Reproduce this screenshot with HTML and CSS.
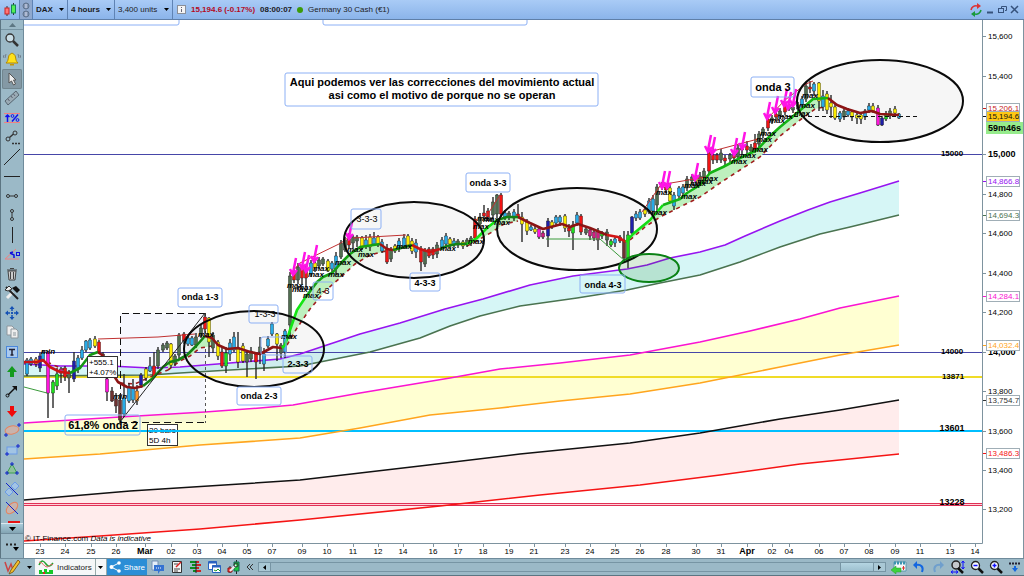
FILE: index.html
```html
<!DOCTYPE html>
<html lang="en">
<head>
    <meta charset="UTF-8">
    <meta name="viewport" content="width=device-width, initial-scale=1.0">
    <title>DAX - 4 hours</title>
    <link rel="stylesheet" href="styles.css">
</head>
<body>

<header class="topbar">
    <button class="top-btn top-logo" aria-label="Chart style">
        <svg width="14" height="14" viewBox="0 0 14 14"><path d="M4 3v10M10.500 0v12" stroke="#333"/><rect x="2" y="5" width="4" height="6" fill="#f77" stroke="#c22"/><rect x="8.500" y="2" width="4" height="8" fill="#5e5" stroke="#185"/></svg>
    </button>
    <button class="top-btn top-link" aria-label="Link windows">
        <svg width="10" height="16" viewBox="0 0 10 16"><g fill="#8397b5" stroke="#60728c"><circle cx="5" cy="4" r="3"/><circle cx="5" cy="12" r="3"/></g><path d="M5 2v4M5 10v4" stroke="#dde"/></svg>
    </button>
    <span class="picker">
        <select class="bold" aria-label="Instrument"><option>DAX</option></select>
        <svg class="caret" viewBox="0 0 5 3"><path d="M0 0h5L2.500 3z"/></svg>
    </span>
    <span class="picker">
        <select class="bold" aria-label="Timeframe"><option>4 hours</option></select>
        <svg class="caret" viewBox="0 0 5 3"><path d="M0 0h5L2.500 3z"/></svg>
    </span>
    <span class="picker">
        <select aria-label="Units"><option>3,400 units</option></select>
        <svg class="caret" viewBox="0 0 5 3"><path d="M0 0h5L2.500 3z"/></svg>
    </span>
    <div class="quote">
        <svg width="9" height="9" viewBox="0 0 9 9"><rect x=".5" y=".5" width="8" height="8" fill="#f4f4f4" stroke="#8a8f99"/><path d="M4.500 2v1M4.500 4v3" stroke="#667"/></svg>
        <b class="down">15,194.6 (-0.17%)</b>
        <b>08:00:07</b>
        <span class="dot"></span>
        <span>Germany 30 Cash (€1)</span>
    </div>
    <div class="window-buttons">
        <button aria-label="Refresh"><svg width="14" height="14" viewBox="0 0 14 14" fill="none" stroke-width="1.500"><path d="M2 7a5 5 0 0 1 6-4" stroke="#d33"/><path d="M12 7a5 5 0 0 1-6 4" stroke="#1a9a3a"/><path d="M8 0l4 3-4 3z" fill="#d33"/><path d="M6 8l-4 3 4 3z" fill="#1a9a3a"/></svg></button>
        <button aria-label="Minimise"><svg width="9" height="9" viewBox="0 0 9 9"><path d="M1 7.500h6" stroke="#36527c" stroke-width="2"/></svg></button>
        <button aria-label="Restore"><svg width="9" height="9" viewBox="0 0 9 9" fill="none" stroke="#36527c"><path d="M3.500 3V1.500h5v4H7"/><rect x=".5" y="3.500" width="5" height="4"/></svg></button>
        <button aria-label="Close"><svg width="9" height="9" viewBox="0 0 9 9"><path d="M1 1l7 7M8 1L1 8" stroke="#36527c" stroke-width="1.500"/></svg></button>
    </div>
</header>

<main class="workspace">
    <nav class="tools" aria-label="Drawing tools">
        <button class="tools-up" aria-label="Scroll up"><svg width="7" height="4" viewBox="0 0 7 4"><path d="M0 4h7L3.500 0z" fill="#5d7783"/></svg></button>
        <div class="tool-list">
            <button aria-label="Zoom"><svg class="tool" viewBox="0 0 18 18"><circle cx="7" cy="7" r="4" fill="#c9dde6" stroke="#333" stroke-width="1.300"/><path d="M10 10l5 5" stroke="#333" stroke-width="2.500"/></svg></button>
            <button aria-label="Alert"><svg class="tool" viewBox="0 0 18 18"><path d="M3 13c2-2 2-3 2.500-6C6 4 8 4 9 3c1 1 3 1 3.500 4 .5 3 .5 4 2.500 6z" fill="#ffe11a" stroke="#b48a00"/><path d="M7 14h4v1.500H7z" fill="#c89600"/><path d="M3 4L2 8M15 4l1 4M1 5L0 8M17 5l1 3" stroke="#556" stroke-width=".6"/></svg></button>
            <button class="selected" aria-label="Pointer"><svg class="tool" viewBox="0 0 18 18"><path d="M6 3v10l2.500-2 2 4 2-1-2-4H13z" fill="#eee" stroke="#555"/></svg></button>
            <button aria-label="Ruler"><svg class="tool" viewBox="0 0 18 18"><path d="M2 12L13 2l3 4L5 16z" fill="#9aabb5" stroke="#566570"/><path d="M5 10l1.500 2M8 7l1.500 2M10.500 5l1.500 2" stroke="#445" stroke-width=".7"/></svg></button>
            <button aria-label="Percent"><svg class="tool" viewBox="0 0 18 18"><path d="M1 4.500h16M1 13.500h16" stroke="#f28080"/><path d="M4.500 13V6M2.500 8l2-2 2 2M15 5.500L9 12.500" stroke="#11e" stroke-width="1.500" fill="none"/><circle cx="9.500" cy="7" r="1.400" fill="none" stroke="#11e"/><circle cx="14.500" cy="11" r="1.400" fill="none" stroke="#11e"/></svg></button>
            <button aria-label="Segment"><svg class="tool" viewBox="0 0 18 18" fill="none" stroke="#333"><circle cx="5" cy="11" r="2"/><circle cx="12" cy="5" r="2"/><path d="M6.500 9.500l4-3.500" stroke-width="1.500"/><path d="M9 15.500h8" stroke-dasharray="2 1" stroke-width="1.500"/></svg></button>
            <button aria-label="Line"><svg class="tool" viewBox="0 0 18 18"><path d="M1 17L17 1" stroke="#222"/></svg></button>
            <button aria-label="Horizontal line"><svg class="tool" viewBox="0 0 18 18"><path d="M1 9.500h16" stroke="#222"/></svg></button>
            <button aria-label="Horizontal segment"><svg class="tool" viewBox="0 0 18 18" fill="none" stroke="#333"><circle cx="5" cy="9" r="1.500"/><circle cx="13" cy="9" r="1.500"/><path d="M6.500 9h5"/></svg></button>
            <button aria-label="Vertical segment"><svg class="tool" viewBox="0 0 18 18" fill="none" stroke="#333"><circle cx="9" cy="5" r="1.500"/><circle cx="9" cy="13" r="1.500"/><path d="M9 6.500v5"/></svg></button>
            <button aria-label="Vertical line"><svg class="tool" viewBox="0 0 18 18"><path d="M9.500 1v16" stroke="#222"/></svg></button>
            <button aria-label="Angle"><svg class="tool" viewBox="0 0 18 18" fill="none"><path d="M13 4L2 14h14" stroke="#f08080"/><path d="M7 8l4 2v3M7 8l3-1" stroke="#11d" stroke-width="1.500"/><rect x="13.500" y="7.500" width="3" height="3" stroke="#11d"/></svg></button>
            <button aria-label="Delete"><svg class="tool" viewBox="0 0 18 18" fill="none" stroke="#444"><path d="M5 6l1 9h6l1-9z" fill="#ccc"/><path d="M4 5h10M7 3.500h4M7.500 7v7M10.500 7v7"/></svg></button>
            <button aria-label="Settings"><svg class="tool" viewBox="0 0 18 18"><path d="M4 14l6-6" stroke="#eee" stroke-width="3"/><path d="M3 3l12 12" stroke="#222" stroke-width="2"/><path d="M2 6l4-4 3 3-4 2z" fill="#eee" stroke="#333"/><path d="M9 4l4-2 4 4-3 3z" fill="#111"/></svg></button>
            <button aria-label="Move"><svg class="tool" viewBox="0 0 18 18" fill="#1450b4"><path d="M9 2l2.500 3h-5zM9 16l2.500-3h-5zM2 9l3-2.500v5zM16 9l-3-2.500v5z"/><path d="M9 5v8M5 9h8" stroke="#1450b4" stroke-dasharray="2 1" stroke-width="1.500"/></svg></button>
            <button aria-label="Copy"><svg class="tool" viewBox="0 0 18 18" fill="#eee" stroke="#8d979d"><path d="M4 3h5l2 2v7H4z"/><path d="M8 6h5l2 2v7H8z"/><path d="M10 10h3M10 12h3"/></svg></button>
            <button aria-label="Text"><svg class="tool" viewBox="0 0 18 18" fill="none"><rect x="3.500" y="3.500" width="11" height="11" fill="#a9caef" stroke="#4b88dc"/><path d="M6 6.500h6M9 6v6M7.500 12h3" stroke="#223" stroke-width="1.500"/></svg></button>
            <button aria-label="Up arrow"><svg class="tool" viewBox="0 0 18 18"><path d="M9 3l5 6h-3v5H7V9H4z" fill="#149a1e"/></svg></button>
            <button aria-label="Arrow"><svg class="tool" viewBox="0 0 18 18"><path d="M5 13l7-7" stroke="#111" stroke-width="1.500"/><path d="M9 4h5v5z" fill="#111"/><circle cx="4.500" cy="13.500" r="1.500" fill="none" stroke="#111"/></svg></button>
            <button aria-label="Down arrow"><svg class="tool" viewBox="0 0 18 18"><path d="M9 15l5-6h-3V4H7v5H4z" fill="#f00a0a"/></svg></button>
            <button aria-label="Ellipse"><svg class="tool" viewBox="0 0 18 18"><ellipse cx="9" cy="9" rx="7" ry="4" fill="#c9b3ac" stroke="#e58460" transform="rotate(-10 9 9)"/><path d="M1 14h4M3 12v4M14 4h4M16 2v4" stroke="#12c"/></svg></button>
            <button aria-label="Rectangle"><svg class="tool" viewBox="0 0 18 18"><rect x="4" y="6" width="10" height="7" fill="#a2c4e4" stroke="#6b9ae6"/><path d="M2 13h4M4 11v4M13 5h4M15 3v4" stroke="#12c"/></svg></button>
            <button aria-label="Triangle"><svg class="tool" viewBox="0 0 18 18"><path d="M9 4l5 9H4z" fill="#8fc09d" stroke="#3da14c"/><path d="M7 4h4M9 2v4M2 13h4M4 11v4M12 13h4M14 11v4" stroke="#12c"/></svg></button>
            <button aria-label="Channel"><svg class="tool" viewBox="0 0 18 18" fill="none"><path d="M2 12l4-4 4 4-4 4zM8 6l4-4 4 4-4 4z" fill="#a2c4e4" stroke="#6b9ae6"/><path d="M3 3l12 12" stroke="#12c"/></svg></button>
            <button aria-label="Fibonacci ellipse"><svg class="tool" viewBox="0 0 18 18"><ellipse cx="9" cy="9" rx="7" ry="4" fill="#c9b3ac" stroke="#e58460" transform="rotate(-45 9 9)"/><path d="M3 3l12 12" stroke="#12c"/></svg></button>
        </div>
        <div class="tools-cut"></div>
        <button class="tools-down" aria-label="Scroll down"><svg width="7" height="4" viewBox="0 0 7 4"><path d="M0 0h7L3.500 4z"/></svg></button>
        <button class="tools-more" aria-label="More tools"><svg width="14" height="10" viewBox="0 0 14 10"><path d="M1 3.500h11" stroke="#222" stroke-width="2" stroke-dasharray="2 2"/><path d="M8 6h6l-3 4z"/></svg></button>
    </nav>

    <svg class="chart" id="chart" viewBox="24 20 1000 538" role="img" aria-label="DAX price chart">
        <defs><clipPath id="plot"><rect x="24" y="20" width="958" height="523"/></clipPath></defs>

        <g clip-path="url(#plot)">
            <g id="clouds"></g>
            <rect x="120" y="313" width="85" height="109" fill="#5064dc" fill-opacity=".05"/>
            <!-- circled corrections -->
            <g fill="#000" fill-opacity=".035">
                <ellipse cx="254" cy="349" rx="70" ry="38"/>
                <ellipse cx="414" cy="240" rx="70" ry="38"/>
                <ellipse cx="577" cy="229" rx="80" ry="41"/>
                <ellipse cx="880" cy="101" rx="83" ry="41"/>
            </g>

            <!-- price levels -->
            <path d="M24 154.500h958M24 352.500h958" stroke="#4646a8"/>
            <path d="M24 377h958" stroke="#f0dc28" stroke-width="2"/>
            <path d="M24 431h958" stroke="#00bfff" stroke-width="2"/>
            <path d="M24 504.500h958" stroke="#ffd0d8"/>
            <path d="M24 503.500h958M24 505.500h958" stroke="#e03055"/>

            <g id="averages" class="curve"></g>

            <!-- measured swing -->
            <path d="M120.500 422V313.500H205M120 422.500h85" class="thin" stroke="#111" stroke-dasharray="7 4"/>
            <path d="M205.500 313v110" class="thin" stroke="#555" stroke-dasharray="3 3"/>

            <g id="bands"></g>
            <g id="candles"></g>
            <g id="trend" class="curve"></g>
            <path class="thin" stroke="#222" d="M120 422L205 313"/>
            <path class="thin" stroke="#c03030" d="M98 339l60-2 37-3M290 274l10-11 41-20 8-6M353 238l53-3M484 220l16-25M642 212l18-26M665 184l41-7M709 152l49-13M768 118l17-18 21-16 7-3"/>
            <path class="thin" stroke="#3a9a3a" d="M24 387l23 6M546 239h54l25 22"/>
            <path stroke="#111" stroke-dasharray="4 3" d="M780 116.500h137"/>
            <g id="marks" class="mark"></g>
            <g id="arrows"></g>

            <g class="ring">
                <ellipse cx="254" cy="349" rx="70" ry="38"/>
                <ellipse cx="414" cy="240" rx="70" ry="38"/>
                <ellipse cx="577" cy="229" rx="80" ry="41"/>
                <ellipse cx="880" cy="101" rx="83" ry="41"/>
            </g>
            <ellipse cx="649" cy="268" rx="30" ry="14" fill="#0a780a" fill-opacity=".15" stroke="#0a8214" stroke-width="2"/>

            <g class="note">
                <rect x="20" y="10" width="159" height="15"/>
                <rect x="323" y="10" width="204" height="15"/>
                <rect x="285" y="73" width="313" height="33" class="solid"/>
                <rect x="751" y="77" width="43" height="20"/>
                <rect x="466" y="173" width="44" height="19" class="solid"/>
                <rect x="178" y="288" width="44" height="19" class="solid"/>
                <rect x="580" y="275" width="45" height="18"/>
                <rect x="237" y="387" width="44" height="18" class="solid"/>
                <rect x="351" y="209" width="30" height="20"/>
                <rect x="410" y="273" width="30" height="18"/>
                <rect x="249" y="305" width="29" height="18"/>
                <rect x="283" y="356" width="29" height="17"/>
                <rect x="313" y="282" width="20" height="18"/>
                <rect x="261" y="337" width="25" height="18"/>
                <rect x="65" y="415" width="75" height="20"/>
            </g>
            <g class="note-text">
                <text x="442" y="86" class="large">Aqui podemos ver las correcciones del movimiento actual</text>
                <text x="442" y="99" class="large">asi como el motivo de porque no se operan</text>
                <text x="773" y="91" class="large">onda 3</text>
                <text x="103" y="429" class="large">61,8% onda 2</text>
                <text x="488" y="186">onda 3-3</text>
                <text x="200" y="300">onda 1-3</text>
                <text x="603" y="288">onda 4-3</text>
                <text x="259" y="399">onda 2-3</text>
                <text x="367" y="222" class="plain">3-3-3</text>
                <text x="425" y="286">4-3-3</text>
                <text x="265" y="317" class="plain">1-3-3</text>
                <text x="298" y="367">2-3-3</text>
                <text x="323" y="294" class="plain">4-3</text>
            </g>
            <g class="measure">
                <rect x="87.500" y="356.500" width="30" height="21"/>
                <text x="89" y="365">+555.1</text>
                <text x="89" y="375">+4.07%</text>
                <rect x="147.500" y="424.500" width="30" height="21"/>
                <text x="149" y="433">20 bars</text>
                <text x="149" y="443">5D 4h</text>
                <path d="M148 431h30" stroke="#00bfff" stroke-width="2"/>
            </g>
            <g class="level-text">
                <text x="952" y="156">15000</text>
                <text x="952" y="354">14000</text>
                <text x="953" y="379">13871</text>
                <text x="952" y="431" class="mid">13601</text>
                <text x="952" y="505" class="mid">13228</text>
            </g>
            <text x="25" y="541">© IT-Finance.com <tspan font-style="italic">Data is indicative</tspan></text>
        </g>

        <g id="axes"></g>
    </svg>
</main>

<footer class="bottombar">
    <button class="pencil" aria-label="Draw"><svg width="18" height="16" viewBox="0 0 18 16"><path d="M2 3l3 9 3-7 2 6" fill="none" stroke="#c44" stroke-width="1.500"/><path d="M15 1L8 11l-2 4 4-2 7-10z" fill="#f6c22c" stroke="#86601a"/></svg></button>
    <button class="drop" aria-label="Draw options"><svg class="caret" viewBox="0 0 5 3"><path d="M0 0h5L2.500 3z"/></svg></button>
    <button class="indicators"><svg width="16" height="16" viewBox="0 0 16 16"><path d="M1 6c3-6 5-4 7-1s4 3 7-1" fill="none" stroke="#26a030" stroke-width="1.500"/><path d="M1 3c4 0 5 5 8 5 2 0 4-4 6-2" fill="none" stroke="#e46060"/><path d="M1 15v-4h3v2h2v-3h3v3h2v-2h4v4z" fill="#14c828"/><path d="M5 15v-2h2v2z" fill="#d22"/></svg>Indicators</button>
    <button class="drop light" aria-label="Indicator options"><svg class="caret" viewBox="0 0 5 3"><path d="M0 0h5L2.500 3z"/></svg></button>
    <button class="share"><svg width="12" height="12" viewBox="0 0 12 12" fill="#fff"><path d="M10 2L2 6l8 4" fill="none" stroke="#fff"/><circle cx="10" cy="2" r="1.800"/><circle cx="2.500" cy="6" r="2"/><circle cx="10" cy="10" r="1.800"/></svg>Share</button>
    <div class="icons">
        <button aria-label="Chat"><svg width="13" height="14" viewBox="0 0 13 14"><path d="M1 1h6v9H1z" fill="#e4eefa" stroke="#7791b5"/><path d="M3 5h10v6H9l-2 3v-3H3z" fill="#3573d2"/><path d="M5 8h6" stroke="#fff" stroke-dasharray="1 1"/></svg></button>
        <button aria-label="Report"><svg width="13" height="14" viewBox="0 0 13 14"><path d="M2.500 1.500h9v11h-9z" fill="#f4f4f4" stroke="#333"/><path d="M4 4h4M4 9h6M4 11h4" stroke="#444"/><path d="M6 7l5-5" stroke="#d22" stroke-width="1.500"/></svg></button>
        <button aria-label="Order book"><svg width="13" height="14" viewBox="0 0 13 14"><path d="M1 2h6M3 5h4M1 8h6M4 11h3" stroke="#0a8a20" stroke-width="2"/><path d="M7 2h3M7 5h5M7 8h3M7 11h5" stroke="#c22" stroke-width="2"/><path d="M7 1v12" stroke="#222"/></svg></button>
        <button aria-label="Charts"><svg width="13" height="14" viewBox="0 0 13 14" fill="#fff" stroke="#2a63c0"><path d="M.5 1.500h8v8h-8z"/><path d="M1 2.500h8" stroke-width="2"/><path d="M4.500 5.500h8v7h-8z"/><path d="M4 6.500h9" stroke-width="2"/><path d="M6 10l2 1 2-2 2 2" stroke="#1a9a28" fill="none"/></svg></button>
        <button aria-label="Trade settings"><svg width="13" height="14" viewBox="0 0 13 14"><path d="M9.500 0v14M3 6v7" stroke="#222"/><path d="M7 2h5v9H7z" fill="#1ec83c" stroke="#165"/><path d="M1 8h4v4H1z" fill="#f44" stroke="#811"/><path d="M3 11l6-6" stroke="#eee" stroke-width="2"/><circle cx="9" cy="5" r="2" fill="none" stroke="#333"/></svg></button>
        <button aria-label="Collapse"><svg width="8" height="8" viewBox="0 0 8 8"><path d="M4 1L1 4l3 3M7 1L4 4l3 3" fill="none" stroke="#333"/></svg></button>
    </div>
    <div class="scroller">
        <button aria-label="Scroll left"><svg width="3" height="5" viewBox="0 0 3 5"><path d="M3 0v5L0 2.500z"/></svg></button>
        <div class="track"><div class="thumb"></div></div>
        <button aria-label="Scroll right"><svg width="3" height="5" viewBox="0 0 3 5"><path d="M0 0v5l3-2.500z"/></svg></button>
    </div>
    <div class="icons right">
        <button aria-label="Go to date"><svg width="16" height="14" viewBox="0 0 16 14"><path d="M3 2h12v9H3z" fill="#f4f8fa" stroke="#5d98ac"/><path d="M3 3h12" stroke="#3c93b0" stroke-width="3" stroke-dasharray="2 1"/><path d="M11 8h3M12.500 6v4" stroke="#d33"/><path d="M0 10l5-4v2h5v4H5v2z" fill="#3cd23c" stroke="#28a028" stroke-width=".5"/></svg></button>
        <button aria-label="Undo"><svg width="14" height="14" viewBox="0 0 14 14"><path d="M4 5c5-1 8 2 6 7" fill="none" stroke="#1467e0" stroke-width="2"/><path d="M5 1v8L1 5z" fill="#1467e0"/></svg></button>
        <button aria-label="Redo"><svg width="14" height="14" viewBox="0 0 14 14"><path d="M10 5c-5-1-8 2-6 7" fill="none" stroke="#6f9fcd" stroke-width="2"/><path d="M9 1v8l4-4z" fill="#6f9fcd"/></svg></button>
        <button aria-label="Fit"><svg width="15" height="14" viewBox="0 0 15 14"><circle cx="6" cy="5" r="4" fill="#c4c8cc" stroke="#222" stroke-width="1.500"/><path d="M8 8l5 5" stroke="#111" stroke-width="2.500"/><path d="M13 1v8M11.500 3L13 1l1.500 2M11.500 7L13 9l1.500-2M1 12h7M3 10.500L1 12l2 1.500M6 10.500L8 12l-2 1.500" fill="none" stroke="#11f"/></svg></button>
        <button aria-label="Zoom out"><svg width="14" height="14" viewBox="0 0 14 14"><circle cx="5.500" cy="5.500" r="4" fill="#f4f8ff" stroke="#222" stroke-width="1.300"/><path d="M8.500 8.500l4.500 4.500" stroke="#111" stroke-width="2.500"/><path d="M3.500 5.500h4" stroke="#11f" stroke-width="1.500"/></svg></button>
        <button aria-label="Zoom in"><svg width="14" height="14" viewBox="0 0 14 14"><circle cx="5.500" cy="5.500" r="4" fill="#f4f8ff" stroke="#222" stroke-width="1.300"/><path d="M8.500 8.500l4.500 4.500" stroke="#111" stroke-width="2.500"/><path d="M3.500 5.500h4M5.500 3.500v4" stroke="#11f" stroke-width="1.500"/></svg></button>
        <button aria-label="Show axis"><svg width="14" height="14" viewBox="0 0 14 14"><path d="M1 3.500h12" stroke="#223" stroke-width="2" stroke-dasharray="2 1"/><path d="M7 6v3" stroke="#1467e0" stroke-width="2"/><path d="M4 8h6l-3 4z" fill="#1467e0"/></svg></button>
    </div>
</footer>

<script src="chart.js"></script>
</body>
</html>
```

FILE: styles.css
```css
* {
    box-sizing: border-box;
}
body {
    display: flex;
    flex-direction: column;
    height: 100vh;
    margin: 0;
    overflow: hidden;
    background: #fff;
    color: #1c1c24;
    font-family: "Liberation Sans", Arial, sans-serif;
    font-size: 8px;
}
button, select {
    margin: 0;
    padding: 0;
    border: 0;
    background: none;
    color: inherit;
    font: inherit;
}
button {
    display: flex;
    align-items: center;
    justify-content: center;
}
.caret {
    width: 5px;
    height: 3px;
}

/* top bar */
.topbar {
    display: flex;
    flex: none;
    height: 20px;
    background: linear-gradient(#a9cbf6, #8bb4ea);
    border-bottom: 1px solid #5f7fa8;
}
.top-btn, .picker {
    border-right: 1px solid #5f83b4;
}
.top-logo {
    width: 20px;
}
.top-link {
    width: 13px;
    background: #8fa9cf;
}
.picker {
    display: flex;
    align-items: center;
    gap: 6px;
    padding: 0 3px;
}
.picker select {
    appearance: none;
}
.picker .bold {
    font-weight: bold;
}
.quote {
    display: flex;
    align-items: center;
    gap: 5px;
    padding-left: 4px;
}
.down {
    color: #b40a1e;
}
.dot {
    width: 6px;
    height: 6px;
    border-radius: 50%;
    background: #3c9b0a;
}
.window-buttons {
    display: flex;
    gap: 3px;
    margin-left: auto;
    padding-right: 5px;
}

/* left tools */
.workspace {
    display: flex;
    flex: 1;
    min-height: 0;
}
.tools {
    display: flex;
    flex-direction: column;
    flex: none;
    width: 24px;
    background: #9bb9c7;
    border-left: 1px solid #5c7582;
    border-right: 1px solid #6f8b9b;
}
.tools-up {
    height: 10px;
    border-bottom: 1px solid #7795a4;
}
.tool-list {
    display: flex;
    flex: 1;
    flex-direction: column;
}
.tool-list button {
    flex: 1;
    min-height: 0;
    margin: 0 1px;
    border-radius: 2px;
}
.tool-list .selected {
    background: #8499a5;
    box-shadow: inset 0 0 0 1px #71868f;
}
.tool {
    width: 18px;
    height: 18px;
}
.tools-cut {
    height: 2px;
    margin: 3px 3px 0 7px;
    background: #e61414;
}
.tools-down {
    height: 11px;
    border-top: 1px solid #dce8ee;
    border-bottom: 1px solid #6f8b9b;
    background: linear-gradient(#a9cbd9, #83a4b3);
}
.tools-more {
    height: 24px;
}

/* chart */
.chart {
    flex: 1;
    min-width: 0;
    height: 100%;
    background: #fff;
}
.chart text {
    font-size: 8px;
}
.curve {
    fill: none;
    stroke-linejoin: round;
}
.thin {
    fill: none;
    stroke-width: 1;
}
.ring {
    fill: none;
    stroke: #0a0a0a;
    stroke-width: 2;
}
.note rect {
    fill: none;
    stroke: #8cb0f5;
    rx: 2px;
}
.note .solid {
    fill: #fff;
}
.chart .note-text text {
    font-size: 9px;
    font-weight: bold;
    text-anchor: middle;
}
.chart .note-text .large {
    font-size: 11px;
}
.chart .note-text .plain {
    font-weight: normal;
}
.measure rect {
    fill: #fff;
    stroke: #333;
}
.mark {
    font-style: italic;
    font-weight: bold;
}
.level-text {
    font-weight: bold;
    text-anchor: middle;
}
.chart .level-text .mid, .chart .axis-bold {
    font-size: 9px;
    font-weight: bold;
}
.axis-line {
    fill: none;
    stroke: #7e939f;
}
.date {
    text-anchor: middle;
}

/* bottom bar */
.bottombar {
    display: flex;
    flex: none;
    height: 18px;
    background: #9bb9c7;
    border-top: 1px solid #6f8b9b;
    border-bottom: 1px solid #5c7582;
}
.pencil {
    width: 24px;
}
.drop {
    width: 11px;
}
.indicators, .light {
    background: #f5f7f8;
    border-right: 1px solid #9aa;
}
.indicators {
    gap: 3px;
    padding: 0 3px;
}
.share {
    gap: 3px;
    padding: 0 2px;
    background: #2b8ed6;
    color: #fff;
}
.icons {
    display: flex;
    gap: 6px;
    padding: 0 4px;
}
.scroller {
    display: flex;
    flex: 1;
    margin: 3px 0;
    border: 1px solid #7795a4;
}
.scroller button {
    width: 11px;
    background: #a9c8d5;
}
.track {
    display: flex;
    flex: 1;
    justify-content: flex-end;
    border-left: 1px solid #7795a4;
    border-right: 1px solid #7795a4;
}
.thumb {
    width: 33px;
    background: linear-gradient(#b5d5e2, #9dc0cf);
    border-left: 1px solid #7795a4;
}
.right {
    gap: 5px;
    padding: 0 2px 0 5px;
}
```

FILE: chart.js
```js
const NS = 'http://www.w3.org/2000/svg';

function add(parent, tag, attrs, text) {
    const el = document.createElementNS(NS, tag);
    for (const key in attrs) el.setAttribute(key, attrs[key]);
    if (text) el.textContent = text;
    document.getElementById(parent).appendChild(el);
}

// Long moving averages, as x y pairs
const purple = '24 364 60 366 110 366 150 368 180 367 230 363 280 359 300 354 330 344 360 334 400 323 445 309 483 299 530 285 573 276 627 269 647 265 670 258 700 252 725 245 745 236 780 221 808 210 830 202 860 193 899 181';
const green = '24 376 150 375 180 373 230 370 300 366 330 360 370 352 420 338 450 326 480 316 520 306 577 298 627 290 660 283 700 275 740 262 780 247 820 234 850 227 899 215';
const magenta = '24 423 120 417 205 412 260 408 293 405 360 393 450 378 500 369 560 363 630 355 700 342 750 331 800 319 840 308 899 296';
const orange = '24 459 100 454 200 445 300 438 360 428 430 415 500 408 560 401 630 394 700 383 780 367 840 355 899 345';
const black = '24 500 130 491 240 484 300 480 420 466 520 454 630 443 700 433 780 419 840 410 899 400';
const red = '24 541 100 536 200 529 300 520 440 506 540 495 640 485 720 475 800 464 899 454';

function between(top, bottom) {
    const back = bottom.split(' ');
    let points = top;
    for (let i = back.length - 2; i >= 0; i -= 2) points += ` ${back[i]} ${back[i + 1]}`;
    return points;
}

[[purple, green, '#d6f6f6'], [magenta, orange, '#ffffd2'], [black, red, '#ffecec']].forEach(([a, b, fill]) => {
    add('clouds', 'polygon', { points: between(a, b), fill });
});
[[purple, '#9614f0'], [green, '#4a7350'], [magenta, '#fa14d2'], [orange, '#ffa51e'], [black, '#111'], [red, '#f51414']].forEach(([points, stroke]) => {
    add('averages', 'polyline', { points, stroke, 'stroke-width': 1.6 });
});

// Short average, coloured by direction
const trend = [
    ['#c81414', '24 362 37 362 43 360 50 367 60 372 70 373'],
    ['#149614', '70 373 80 368 90 355 98 352'],
    ['#8c1414', '98 352 102 355 110 370 118 382 127 387 135 388 143 386'],
    ['#148214', '143 386 153 378 163 367 170 362 178 360 187 355 197 345 205 336'],
    ['#8c1414', '205 336 212 338 218 345 227 349 238 348 250 352 260 354 273 347 282 348'],
    ['#14e614', '282 348 285 345 290 330 297 310 305 298'],
    ['#14a014', '305 298 317 282 323 277 332 273 342 262 350 254 360 247 380 244'],
    ['#a01414', '380 244 387 249 393 250'],
    ['#148214', '393 250 405 247 412 245'],
    ['#c81414', '412 245 420 249 430 252 440 249'],
    ['#148214', '440 249 447 246 457 244 467 244'],
    ['#14e614', '467 244 477 238 487 228 497 220'],
    ['#148214', '497 220 507 217 518 217'],
    ['#8c1414', '518 217 530 223 543 229 562 224 570 227 578 224 590 228 607 235'],
    ['#d21414', '607 235 618 237 626 242'],
    ['#14dc14', '626 242 633 234 650 220 663 205'],
    ['#14b414', '663 205 680 199 687 193 700 185 710 173 723 167 740 158 757 150 768 138 780 127 797 113 813 99 828 98'],
    ['#8c1414', '828 98 837 105 847 109 860 113 872 111 880 114 899 115']
];
trend.forEach(([stroke, points]) => add('trend', 'polyline', { points, stroke, 'stroke-width': 2.6 }));

// Trailing stop below each rise, with the shaded gap
const stops = [
    ['168 362 178 360 187 355 197 345 205 336 212 338', '168 370 180 361 190 356 200 348 212 346'],
    ['285 345 290 330 297 310 305 298 317 282 332 273 342 262 350 254 360 247 380 244', '287 345 297 328 310 309 325 291 340 278 355 264 370 255 390 250'],
    ['467 244 477 238 487 228 497 220 507 217 518 217', '467 246 480 239 492 232 504 224 518 221'],
    ['630 237 650 220 663 205 680 199 700 185 710 173 740 158 757 150 780 127 797 113 813 99 828 98', '630 240 645 227 660 217 680 207 700 197 720 183 740 170 760 157 780 136 800 120 815 109 828 106']
];
stops.forEach(([top, bottom]) => {
    add('bands', 'polygon', { points: between(top, bottom), fill: '#bef0be' });
    add('bands', 'polyline', { points: bottom, fill: 'none', stroke: '#a01e1e', 'stroke-width': 1.6, 'stroke-dasharray': '4 4' });
});
['24 363 43 360 58 367 70 372', '120 383 135 384 150 377 168 370'].forEach(points => {
    add('bands', 'polyline', { points, fill: 'none', stroke: '#a01e1e', 'stroke-width': 1.6, 'stroke-dasharray': '4 4' });
});

const colors = {
    c: '#28aae6', b: '#1e1eaa', k: '#506e50', r: '#f01414', y: '#faeb00', m: '#ff14dc',
    g: '#1ee11e', n: '#6e3232', o: '#ff9628', p: '#d21e82'
};

// x, high, low, body top, body bottom, colour
const candles = `
27 358 376 360 374 c|31 357 366 359 364 c|36 357 367 359 364 o|40 353 372 356 368 b|43 350 362 353 360 c
48 351 418 352 393 m|53 380 408 382 393 g|57 368 390 374 386 g|61 367 383 369 373 p|65 366 381 368 377 r
69 370 393 372 378 k|74 352 382 361 379 b|78 355 373 358 368 c|82 346 360 350 358 c|86 340 352 341 350 c
90 338 350 340 348 c|95 336 348 339 346 y|99 340 354 342 352 r|103 352 368 354 365 n|107 362 381 366 378 n
107 377 401 379 392 m|112 387 402 391 401 n|116 393 413 399 406 n|120 394 423 400 420 n|124 374 417 398 414 c
129 383 403 387 401 c|133 379 403 388 400 c|137 385 405 391 401 o|141 373 388 375 385 b|146 367 381 369 378 y
150 357 372 366 371 c|154 352 378 366 376 r|158 347 369 350 366 k|163 343 352 345 350 k|167 341 350 343 348 k
171 343 368 344 365 y|175 354 366 356 363 k|179 333 358 335 355 k|184 332 344 334 341 r|188 335 346 338 344 c
192 336 346 338 345 c|196 333 348 337 345 k|201 325 338 328 336 k|205 313 333 317 329 r|209 317 357 318 342 y
213 332 353 335 348 k|218 340 360 342 356 y|222 346 368 352 366 r|226 347 373 353 366 g|230 339 361 343 354 c
234 332 352 337 350 c|238 332 368 349 362 y|243 343 363 346 361 y|247 350 377 354 362 k|251 347 362 351 359 k
256 352 379 354 362 r|260 337 364 347 352 k|264 348 371 354 364 c|268 336 348 339 346 c|272 322 336 324 334 c
277 333 361 334 344 y|281 343 358 345 353 k|285 329 358 331 352 c|290 272 338 276 325 k|294 269 283 272 280 r
298 263 284 267 280 k|302 266 285 268 278 r|306 265 287 269 278 r|311 260 277 263 274 c|315 261 272 263 268 y
319 257 269 260 266 k|323 257 266 259 264 k|328 259 272 261 271 y|332 261 272 263 269 c|336 252 275 256 269 c
341 240 259 243 257 k|345 237 252 240 250 k|349 233 248 239 245 r|353 235 248 237 243 k|357 235 247 237 241 k
362 236 250 238 248 y|366 235 249 240 246 c|370 234 251 237 247 y|374 232 246 238 244 c|378 235 247 237 245 y
382 239 253 242 251 c|387 244 264 248 262 r|391 247 262 250 259 k|395 244 253 246 251 y|399 238 252 241 249 c
404 234 248 238 246 c|408 234 247 236 245 y|412 238 254 241 251 y|416 239 258 243 252 c|421 246 271 249 262 r
425 248 267 251 264 k|429 247 258 249 256 r|433 247 259 249 255 r|437 242 258 245 254 k|442 237 250 240 247 c
446 233 246 236 244 c|450 237 247 239 244 y|454 238 247 241 245 c|458 239 248 241 245 k|463 240 249 242 246 y
467 238 247 240 244 k|471 236 246 238 243 k|475 216 242 219 238 r|480 213 226 217 224 k|484 205 219 213 216 r
488 208 221 211 217 r|493 197 219 202 215 k|497 194 218 195 214 k|501 193 217 195 214 r|505 210 220 213 217 c
509 211 220 213 217 k|514 209 221 212 218 c|518 204 218 214 217 r|522 212 242 217 224 y|527 219 235 222 231 y
531 225 231 227 230 c|535 226 234 229 232 y|539 226 239 229 237 m|543 231 239 233 237 p|548 218 247 221 236 b
552 220 229 222 227 y|556 215 226 217 223 c|560 215 226 217 222 c|565 214 232 216 228 y|569 224 237 228 231 r
573 221 250 225 233 g|577 212 226 215 223 c|581 214 235 216 232 r|586 227 235 229 233 k|590 228 240 230 236 p
594 230 241 232 238 p|598 228 250 231 240 p|602 231 239 233 236 g|607 229 246 232 240 k|611 239 247 241 245 g
615 236 247 239 243 c|620 235 243 237 241 r|624 231 261 240 258 n|628 231 268 235 260 g|632 216 234 217 233 b
636 211 221 214 218 c|640 209 220 212 218 c|645 208 217 210 214 y|649 198 214 201 212 c|653 195 214 199 211 c
657 184 211 187 205 k|662 182 190 184 187 r|666 185 193 187 190 r|670 185 203 188 201 y|674 192 210 195 206 c
679 186 200 188 196 c|683 184 197 187 193 c|687 176 191 179 188 k|692 174 185 177 181 k|696 175 187 178 181 y
700 172 186 176 183 k|704 168 180 171 177 k|709 151 174 153 171 r|713 147 164 155 160 r|717 153 163 155 160 r
721 149 163 153 160 k|725 155 165 158 161 r|730 153 162 155 159 k|734 153 160 155 158 r|738 145 160 148 157 k
742 145 154 148 150 r|747 141 154 146 150 r|751 144 154 147 151 k|755 134 153 143 150 r|759 131 147 134 144 k
763 127 138 129 135 k|768 117 131 119 128 r|772 115 124 118 121 k|776 112 121 114 117 r|780 108 119 111 115 k
785 102 115 105 112 r|789 104 111 106 109 k|793 104 113 107 110 k|798 102 112 105 109 k|802 96 107 99 105 c
806 83 102 86 99 k|810 81 93 87 89 r|814 82 96 84 91 c|819 82 111 83 101 y|823 90 111 96 107 c
827 91 114 94 110 y|831 95 118 103 107 y|835 103 120 107 118 y|840 111 122 113 119 c|844 109 120 111 117 k
848 108 117 111 115 c|852 111 121 112 117 y|857 113 124 115 118 y|861 113 124 115 119 y|865 109 120 111 117 c
869 103 113 106 110 c|873 103 113 106 111 y|878 105 126 108 125 m|882 116 126 118 125 b|886 111 121 114 119 g
890 108 119 111 116 k|895 106 115 109 113 y|899 113 119 114 118 c`;
candles.trim().split(/[|\n]/).forEach(row => {
    const [x, high, low, top, bottom, c] = row.trim().split(' ');
    add('candles', 'path', { d: `M${x} ${high}V${low}`, stroke: '#282828', 'stroke-width': 1.4 });
    add('candles', 'rect', { x: x - 1.6, y: top, width: 3.2, height: bottom - top, fill: colors[c], stroke: '#222', 'stroke-width': 0.4 });
});

// Pivot marks, x and baseline
[[198, 337], [281, 339], [287, 288], [292, 292], [297, 290], [303, 298], [308, 277], [313, 271], [328, 277],
    [335, 265], [347, 252], [358, 257], [396, 249], [440, 251], [468, 244], [473, 229], [477, 221], [483, 222],
    [494, 225], [656, 195], [651, 215], [681, 199], [684, 188], [690, 186], [697, 184], [702, 181], [731, 164],
    [740, 158], [752, 152], [756, 142], [760, 136], [769, 123], [777, 119], [794, 116], [799, 108], [802, 98]
].forEach(([x, y]) => add('marks', 'text', { x, y }, 'max'));
add('marks', 'text', { x: 41, y: 354 }, 'min');
add('marks', 'text', { x: 113, y: 399 }, 'min');

[[293, 275], [302, 269], [306, 272], [314, 262], [349, 239], [662, 188], [667, 188], [695, 180], [708, 152],
    [712, 154], [734, 155], [742, 149], [767, 119], [775, 113], [784, 106], [788, 109], [793, 106]
].forEach(([x, y]) => {
    add('arrows', 'path', {
        d: `M${x + 3} ${y - 17}L${x} ${y - 2}M${x - 3} ${y - 6}L${x} ${y}L${x + 4} ${y - 5}`,
        stroke: '#ff14e6', 'stroke-width': 2.5, fill: 'none'
    });
});

// Axes
add('axes', 'path', { class: 'axis-line', d: 'M24 543.500H982.500V20M1023.500 20V558' });
const prices = [['15,600', 36], ['15,400', 76], ['15,000', 154], ['14,800', 194], ['14,600', 233], ['14,400', 273], ['14,200', 312],
    ['14,000', 352], ['13,800', 391], ['13,600', 431], ['13,400', 470], ['13,200', 509]];
prices.forEach(([label, y]) => {
    add('axes', 'path', { class: 'axis-line', d: `M983 ${y + 0.5}h3` });
    add('axes', 'text', { x: 988, y: y + 3, class: /,000/.test(label) ? 'axis-bold' : '' }, label);
});

[['15,206.1', 108, '#c81e1e', '#fff'], ['15,194.6', 116, '#111', '#ffc814'], ['14,866.8', 181, '#9614f0', '#fff'],
    ['14,694.3', 215, '#4a7350', '#fff'], ['14,284.1', 296, '#fa14d2', '#fff'], ['14,032.4', 345, '#ffa51e', '#fff'],
    ['13,754.7', 400, '#333', '#fff'], ['13,486.3', 453, '#f51414', '#fff']
].forEach(([label, y, color, fill]) => {
    add('axes', 'path', { d: `M983 ${y + 0.5}h3`, stroke: color });
    add('axes', 'rect', { x: 986.5, y: y - 4.5, width: 33, height: 10, fill, stroke: '#a0aeb6' });
    add('axes', 'text', { x: 988, y: y + 3, fill: color }, label);
});
add('axes', 'rect', { x: 986, y: 122, width: 37, height: 12, fill: '#96eb8c' });
add('axes', 'text', { x: 988, y: 131, class: 'axis-bold' }, '59m46s');

const dates = '23 40,24 65,25 91,26 116,Mar 145,02 171,03 197,04 222,05 247,07 272,09 302,10 327,11 353,12 378,14 403,16 433,17 458,18 483,19 509,21 534,23 565,24 590,25 615,26 640,28 666,30 696,31 721,Apr 747,02 772,04 789,06 819,07 844,08 869,09 895,11 920,13 950,14 975';
dates.split(',').forEach(item => {
    const [label, x] = item.split(' ');
    add('axes', 'path', { class: 'axis-line', d: `M${+x + 0.5} 544v3` });
    add('axes', 'text', { x, y: 554, class: isNaN(label) ? 'date axis-bold' : 'date' }, label);
});
```
